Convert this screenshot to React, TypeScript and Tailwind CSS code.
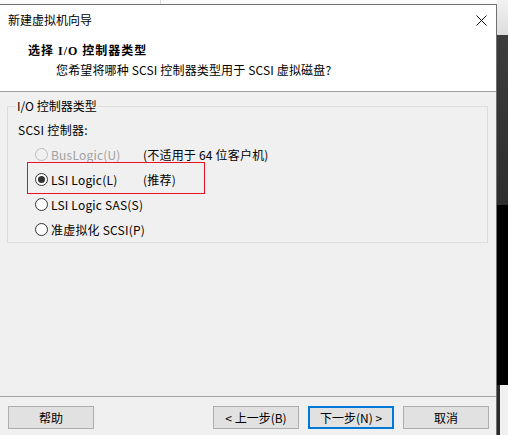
import React from "react";

const font = "font-['Noto_Sans_CJK_SC','Noto_Sans',sans-serif]";

function Radio({ checked, disabled }: { checked?: boolean; disabled?: boolean }) {
  return (
    <span
      className={
        "flex h-[13px] w-[13px] items-center justify-center rounded-full border " +
        (disabled ? "border-[#bcbcbc] bg-[#f0f0f0]" : "border-[#333333] bg-white")
      }
    >
      {checked ? <span className="h-[7px] w-[7px] rounded-full bg-[#333333]" /> : null}
    </span>
  );
}

function Row({
  label,
  note,
  checked,
  disabled,
}: {
  label: string;
  note?: string;
  checked?: boolean;
  disabled?: boolean;
}) {
  return (
    <div className="flex h-[25px] items-center whitespace-nowrap">
      <div className="ml-[27px] shrink-0">
        <Radio checked={checked} disabled={disabled} />
      </div>
      <span
        className={
          "ml-[3px] min-w-[92px] shrink-0 tracking-[0.2px] " + (disabled ? "text-[#a0a0a0]" : "text-black")
        }
      >
        {label}
      </span>
      {note ? <span className="tracking-[0.2px] text-black">{note}</span> : null}
    </div>
  );
}

function Btn({ children, primary }: { children: React.ReactNode; primary?: boolean }) {
  return (
    <div
      className={
        "flex h-[23px] w-[86px] items-center justify-center bg-[#e1e1e1] text-black " +
        (primary ? "border-2 border-[#0078d7]" : "border border-[#adadad]")
      }
    >
      {children}
    </div>
  );
}

export default function App() {
  return (
    <div className={"flex h-[435px] w-[508px] overflow-hidden bg-white text-[12px] leading-[16px] " + font}>
      <div className="flex w-[497px] flex-col">
        <div className="flex h-[4px] bg-[#fbfbfb]">
          <div className="w-[160px]" />
          <div className="w-[1px] bg-[#dadada]" />
        </div>
        <div className="flex flex-1 flex-col border-t border-r border-[#707070] bg-[#f0f0f0]">
          <div className="flex h-[86px] flex-col bg-white">
            <div className="flex h-[30px] items-center justify-between pl-[8px] pr-[8px]">
              <span className="text-black">新建虚拟机向导</span>
              <svg width="11" height="11" viewBox="0 0 11 11" className="mr-[1px]">
                <path d="M0.5 0.5 L10.5 10.5 M10.5 0.5 L0.5 10.5" stroke="#111" strokeWidth="1" />
              </svg>
            </div>
            <div className="mt-[7px] pl-[28px] font-bold text-black">
              <span className="tracking-[1px] font-['Liberation_Serif','Noto_Sans_CJK_SC',serif]">选择 I/O 控制器类型</span>
            </div>
            <div className="mt-[3px] pl-[56px] tracking-[0.15px] text-black">您希望将哪种 SCSI 控制器类型用于 SCSI 虚拟磁盘?</div>
          </div>
          <div className="h-[1px] bg-[#a0a0a0]" />
          <div className="flex flex-1 flex-col">
            <div className="relative ml-[7px] mt-[14px] h-[137px] w-[481px] border border-[#dcdcdc]">
              <span className="absolute left-[8px] top-[-9px] bg-[#f0f0f0] px-[1px] text-black">I/O 控制器类型</span>
              <div className="pl-[10px] pt-[15px] tracking-[0.3px] text-black">SCSI 控制器:</div>
              <div className="mt-[4px]">
                <Row label="BusLogic(U)" note="(不适用于 64 位客户机)" disabled />
                <Row label="LSI Logic(L)" note="(推荐)" checked />
                <Row label="LSI Logic SAS(S)" />
                <Row label="准虚拟化 SCSI(P)" />
              </div>
              <div className="absolute left-[19px] top-[55px] h-[32px] w-[178px] border border-[#e81123]" />
            </div>
            <div className="flex-1" />
            <div className="h-[1px] bg-[#a0a0a0]" />
            <div className="flex h-[38px] items-start pt-[9px] pl-[8px]">
              <Btn>帮助</Btn>
              <div className="ml-[119px]">
                <Btn>&lt; 上一步(B)</Btn>
              </div>
              <div className="ml-[9px]">
                <Btn primary>下一步(N) &gt;</Btn>
              </div>
              <div className="ml-[9px]">
                <Btn>取消</Btn>
              </div>
            </div>
          </div>
        </div>
      </div>
      <div className="flex w-[11px] flex-col">
        <div className="h-[35px] bg-gradient-to-b from-[#f2f2f2] to-[#dcdcdc]" />
        <div className="h-[170px] bg-gradient-to-b from-[#3c3c3c] to-[#2e2e2e]" />
        <div className="h-[180px] bg-black" />
        <div className="flex-1 border-l-[3px] border-[#2a2a2a] bg-[#f0f0f0]" />
      </div>
    </div>
  );
}
